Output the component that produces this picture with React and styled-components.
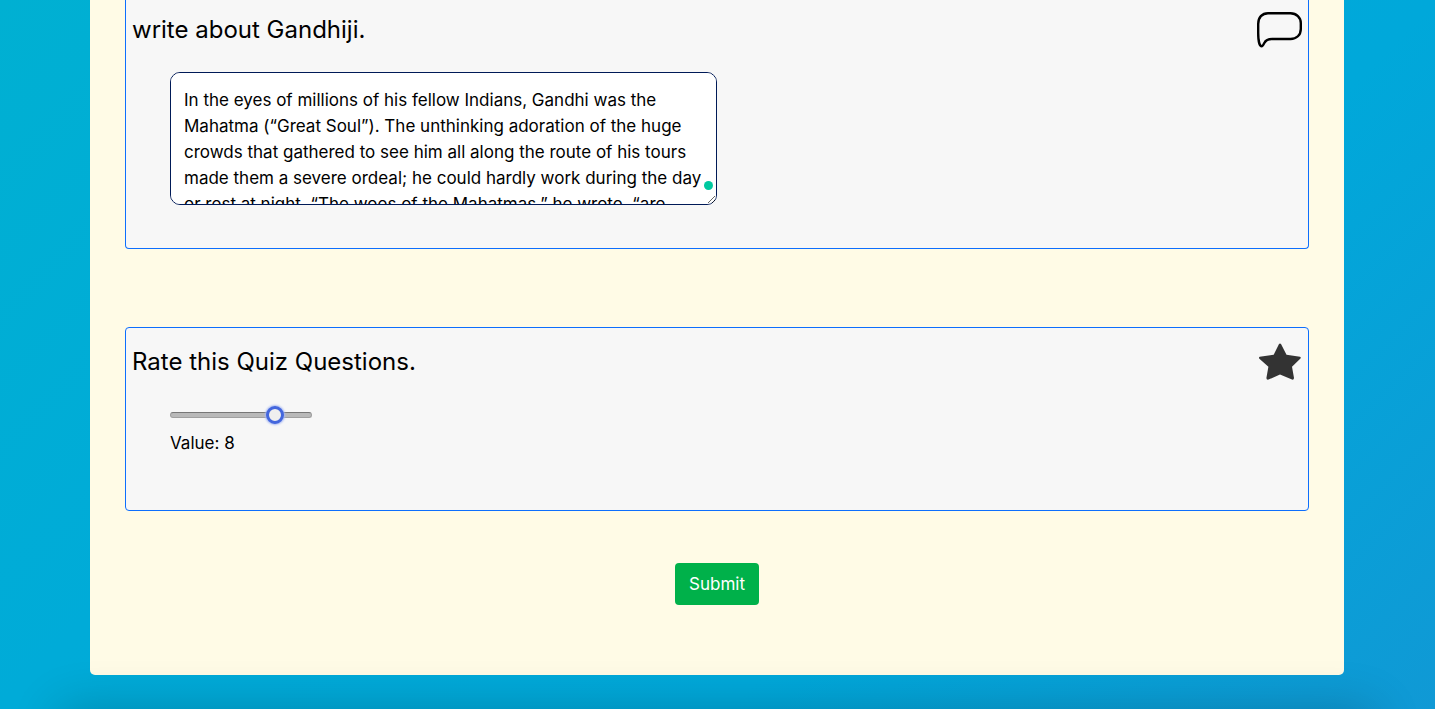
import React, { useState } from "react";
import styled, { createGlobalStyle } from "styled-components";

const GlobalStyle = createGlobalStyle`
  *, *::before, *::after { box-sizing: border-box; }
  body {
    margin: 0;
    color: #000;
    font-family: Inter, "Liberation Sans", sans-serif;
    font-size: 17px;
    line-height: 26px;
  }
`;

const Page = styled.main`
  min-height: 100vh;
  padding: 0 91px 0 90px;
  overflow: hidden;
  background: linear-gradient(135deg, #00b0d2 0%, #00abd8 33%, #00a8da 67%, #1099d5 100%);
`;

const Quiz = styled.form`
  display: flex;
  flex-direction: column;
  padding: 0 35px 70px;
  background: #fffbe6;
  border-radius: 0 0 5px 5px;
`;

const Card = styled.section`
  padding: ${(p) => (p.$continued ? "11px 6px 43px" : "15px 6px 54px")};
  background: #f7f7f7;
  border: 1px solid #0d6efd;
  border-top-width: ${(p) => (p.$continued ? 0 : "1px")};
  border-radius: ${(p) => (p.$continued ? "0 0 4px 4px" : "4px")};
  & + & { margin-top: 78px; }
`;

const CardHeader = styled.header`
  display: flex;
  align-items: center;
  justify-content: space-between;
  height: 38px;
`;

const Question = styled.label`
  font-size: 24px;
  line-height: 38px;
`;

const Icon = styled.svg`
  display: block;
  width: 46px;
  height: 38px;
`;

const Answer = styled.div`
  display: flex;
  flex-direction: column;
  align-items: flex-start;
  margin: ${(p) => p.$gap} 0 0 38px;
`;

const EssayWrap = styled.div`
  position: relative;
  display: flex;
  width: 547px;
  max-width: 100%;
`;

const Essay = styled.textarea`
  width: 100%;
  height: 133px;
  padding: 14px 13px;
  color: #000;
  background: #fff;
  border: 1px solid #001a57;
  border-radius: 10px;
  outline: none;
  font: inherit;
  resize: both;
  scrollbar-width: none;
`;

const StatusDot = styled.span`
  position: absolute;
  right: 4px;
  bottom: 15px;
  width: 9px;
  height: 9px;
  border-radius: 50%;
  background: #00c9a0;
`;

const Slider = styled.input`
  appearance: none;
  width: 142px;
  height: 20px;
  margin: 0;
  background: transparent;
  outline: none;

  &::-webkit-slider-runnable-track {
    height: 6px;
    border: 1px solid #a0a0a0;
    border-top-color: #777;
    border-radius: 3px;
    background: #b9b9b9;
  }
  &::-webkit-slider-thumb {
    appearance: none;
    width: 18px;
    height: 18px;
    margin-top: -7px;
    border: 3px solid #4467dd;
    border-radius: 50%;
    background: #efefef;
    box-shadow: 0 0 2px 1px #a9baf3;
  }
`;

const Value = styled.output`
  margin-top: 5px;
`;

const Submit = styled.button`
  align-self: center;
  height: 42px;
  margin-top: 52px;
  padding: 0 14px;
  border: 0;
  border-radius: 4px;
  background: #00b14a;
  color: #fff;
  font: inherit;
`;

const Footer = styled.footer`
  height: 60px;
  margin: 34px -30px -60px;
  box-shadow: 0 0 50px rgba(0, 0, 0, 0.2);
`;

const essayText =
  "In the eyes of millions of his fellow Indians, Gandhi was the Mahatma (“Great Soul”). The unthinking adoration of the huge crowds that gathered to see him all along the route of his tours made them a severe ordeal; he could hardly work during the day or rest at night. “The woes of the Mahatmas,” he wrote, “are known only to the Mahatmas.”";

export default function App() {
  const [essay, setEssay] = useState(essayText);
  const [rating, setRating] = useState(8);

  return (
    <>
      <GlobalStyle />
      <Page>
        <Quiz onSubmit={(e) => e.preventDefault()}>
          <Card $continued>
            <CardHeader>
              <Question htmlFor="essay">write about Gandhiji.</Question>
              <Icon viewBox="0 0 46 38" aria-hidden="true">
                <path
                  d="M12 2.2H34.5C40.5 2.2 44.8 6.5 44.8 12V18C44.8 24 40.5 28 34.5 28H16C12 28 9.8 29 8.3 32C7.2 34.2 6.4 35.3 5.6 35.3C3.6 35.3 2.2 30 2.2 22V13C2.2 6.5 6 2.2 12 2.2Z"
                  fill="none"
                  stroke="#000"
                  strokeWidth="2.4"
                  strokeLinejoin="round"
                />
              </Icon>
            </CardHeader>
            <Answer $gap="23px">
              <EssayWrap>
                <Essay
                  id="essay"
                  spellCheck={false}
                  value={essay}
                  onChange={(e) => setEssay(e.target.value)}
                />
                <StatusDot />
              </EssayWrap>
            </Answer>
          </Card>

          <Card>
            <CardHeader>
              <Question htmlFor="rating">Rate this Quiz Questions.</Question>
              <Icon viewBox="0 0 46 38" aria-hidden="true">
                <path
                  d="M25 1L30.5 11.8L44 13.8Q45.5 14.5 44.2 15.7L36 23.8L38 35Q37.8 37.2 36 36.6L24 31.5L12.5 36.6Q10.5 37.2 10.4 35L12.4 23.8L3.4 15.7Q2.4 14.5 3.7 13.8L17.7 11.8L23 1Q24 -0.2 25 1Z"
                  fill="#333"
                />
              </Icon>
            </CardHeader>
            <Answer $gap="24px">
              <Slider
                id="rating"
                type="range"
                min="1"
                max="10"
                step="1"
                value={rating}
                onChange={(e) => setRating(Number(e.target.value))}
              />
              <Value htmlFor="rating">Value: {rating}</Value>
            </Answer>
          </Card>

          <Submit type="submit">Submit</Submit>
        </Quiz>
        <Footer />
      </Page>
    </>
  );
}
